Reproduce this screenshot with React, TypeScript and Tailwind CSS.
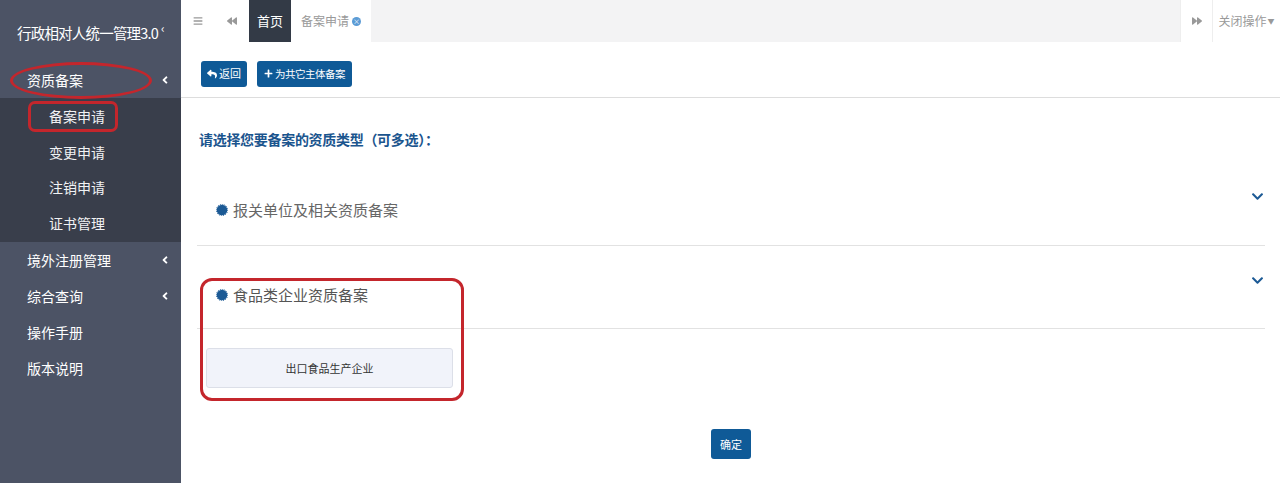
import { FaAngleLeft, FaBackward, FaBars, FaChevronDown, FaForward, FaPlus, FaReply } from "react-icons/fa";

const font = { fontFamily: '"Noto Sans CJK SC", "Noto Sans", sans-serif' };

const subItems = ["备案申请", "变更申请", "注销申请", "证书管理"];
const lowerItems = [
  { label: "境外注册管理", arrow: true },
  { label: "综合查询", arrow: true },
  { label: "操作手册", arrow: false },
  { label: "版本说明", arrow: false },
];

function Bullet() {
  return (
    <svg width="12" height="12" viewBox="0 0 12 12" className="shrink-0">
      <circle cx="6" cy="6" r="5.3" fill="#1c5a95" />
      <circle cx="6" cy="6" r="5.7" fill="none" stroke="#1c5a95" strokeWidth="0.9" strokeDasharray="1.1 1.1" />
    </svg>
  );
}

export default function App() {
  return (
    <div className="relative flex h-[483px] w-[1280px] overflow-hidden bg-white" style={font}>
      {/* Sidebar */}
      <aside className="flex w-[181px] shrink-0 flex-col bg-[#4c5365] text-white">
        <div className="flex h-[62px] items-center whitespace-nowrap pl-[17px] pt-[3px] text-[14.5px] tracking-[-0.8px]">
          <span>行政相对人统一管理3.0</span>
          <span className="-mt-[10px] ml-[3px] text-[12px]">‹</span>
        </div>
        <div className="flex h-[36px] items-center justify-between pl-[27px] pr-[10px] text-[14px]">
          <span>资质备案</span>
          <FaAngleLeft size={12} />
        </div>
        <div className="bg-[#393e4b] py-[1px]">
          {subItems.map((s) => (
            <div key={s} className="flex h-[35.5px] items-center pl-[49px] text-[14px] text-[#f1f2f4]">
              {s}
            </div>
          ))}
        </div>
        {lowerItems.map((it) => (
          <div key={it.label} className="flex h-[36px] items-center justify-between pl-[27px] pr-[10px] text-[14px]">
            <span>{it.label}</span>
            {it.arrow && <FaAngleLeft size={12} />}
          </div>
        ))}
      </aside>

      {/* Main */}
      <main className="flex min-w-0 flex-1 flex-col">
        {/* Tabs bar */}
        <div className="flex h-[42px] items-stretch bg-[#f3f3f4] text-[12px]">
          <div className="flex w-[34px] items-center justify-center bg-white text-[#999]">
            <FaBars size={10} />
          </div>
          <div className="flex w-[34px] items-center justify-center bg-white text-[#999]">
            <FaBackward size={10} />
          </div>
          <div className="flex w-[42px] items-center justify-center bg-[#333a46] text-[13px] text-white">首页</div>
          <div className="flex w-[80px] items-center justify-center gap-[3px] bg-white text-[#999]">
            <span>备案申请</span>
            <span className="flex h-[9px] w-[9px] items-center justify-center rounded-full bg-[#5b9bd5] text-[7px] leading-none text-white">×</span>
          </div>
          <div className="flex-1" />
          <div className="flex w-[32px] items-center justify-center border-l border-[#eee] bg-white text-[#999]">
            <FaForward size={10} />
          </div>
          <div className="flex w-[68px] items-center justify-center border-l border-[#eee] bg-white text-[12px] text-[#999]">
            关闭操作<span className="ml-[1px] text-[7px]">▼</span>
          </div>
        </div>

        {/* Toolbar */}
        <div className="flex h-[56px] items-center gap-[10px] border-b border-[#ddd] pl-[20px] pt-[8px]">
          <button className="flex h-[26px] items-center gap-[2px] rounded-[3px] bg-[#0f5a97] px-[6px] text-[11px] text-white">
            <FaReply size={10} />
            返回
          </button>
          <button className="flex h-[26px] items-center gap-[2px] rounded-[3px] bg-[#0f5a97] px-[7px] text-[10.5px] tracking-[-0.5px] text-white">
            <FaPlus size={9} />
            为共它主体备案
          </button>
        </div>

        {/* Content */}
        <div className="flex flex-col pl-[16px] pr-[15px]">
          <div className="flex h-[73px] items-center pl-[2px] pt-[10px] text-[14px] font-bold tracking-[-0.3px] text-[#1b558e]">
            请选择您要备案的资质类型（可多选）：
          </div>

          <div className="flex h-[75px] items-start justify-between border-b border-[#e2e2e2]">
            <div className="mt-[28px] flex items-center gap-[5px] pl-[19px] text-[15px] text-[#666]">
              <Bullet />
              报关单位及相关资质备案
            </div>
            <FaChevronDown size={13} className="mr-[1px] mt-[19px] text-[#1c5a95]" />
          </div>

          <div className="flex h-[83px] items-start justify-between border-b border-[#e2e2e2]">
            <div className="mt-[38px] flex items-center gap-[5px] pl-[19px] text-[15px] text-[#555]">
              <Bullet />
              食品类企业资质备案
            </div>
            <FaChevronDown size={13} className="mr-[1px] mt-[28px] text-[#1c5a95]" />
          </div>

          <div className="pl-[9px] pt-[19px]">
            <div className="flex h-[40px] w-[247px] items-center justify-center rounded-[3px] border border-[#dcdfe8] bg-[#f1f3fa] text-[11px] text-[#333]">
              出口食品生产企业
            </div>
          </div>

          <div className="flex justify-center pt-[41px]">
            <button className="h-[30px] w-[40px] rounded-[3px] bg-[#0f5a97] text-[11px] text-white">确定</button>
          </div>
        </div>
      </main>

      {/* Red annotation marks */}
      <div className="pointer-events-none absolute left-[10px] top-[62px] h-[37px] w-[142px] rounded-[50%] border-[3px] border-[#c4262c]" />
      <div className="pointer-events-none absolute left-[28px] top-[101px] h-[31px] w-[90px] rounded-[7px] border-[3px] border-[#c4262c]" />
      <div className="pointer-events-none absolute left-[200px] top-[278px] h-[123px] w-[264px] rounded-[12px] border-[3px] border-[#c4262c]" />
    </div>
  );
}
